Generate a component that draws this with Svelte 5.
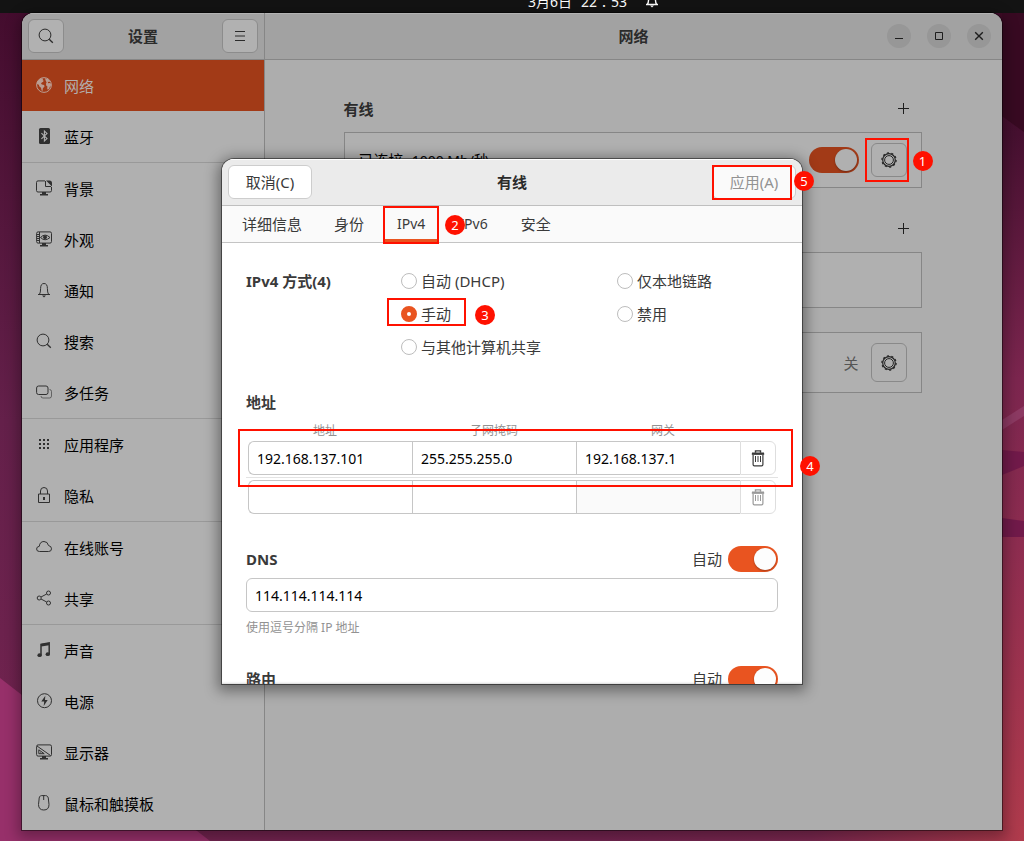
<script lang="ts">
  type Item = { name: string; icon: string; divide?: boolean };

  const items: Item[] = [
    { name: '网络', icon: 'globe' },
    { name: '蓝牙', icon: 'bluetooth', divide: true },
    { name: '背景', icon: 'background' },
    { name: '外观', icon: 'appearance' },
    { name: '通知', icon: 'bell' },
    { name: '搜索', icon: 'search' },
    { name: '多任务', icon: 'windows', divide: true },
    { name: '应用程序', icon: 'apps' },
    { name: '隐私', icon: 'lock', divide: true },
    { name: '在线账号', icon: 'cloud' },
    { name: '共享', icon: 'share', divide: true },
    { name: '声音', icon: 'music' },
    { name: '电源', icon: 'power' },
    { name: '显示器', icon: 'display' },
    { name: '鼠标和触摸板', icon: 'mouse' },
  ];
  let page = $state('网络');

  const tabs = ['详细信息', '身份', 'IPv4', 'IPv6', '安全'];
  let tab = $state('IPv4');

  const methods = [
    ['auto', '自动 (DHCP)'],
    ['link', '仅本地链路'],
    ['manual', '手动'],
    ['off', '禁用'],
    ['shared', '与其他计算机共享'],
  ];
  let method = $state('manual');

  let rows = $state([
    ['192.168.137.101', '255.255.255.0', '192.168.137.1'],
    ['', '', ''],
  ]);
  const columns = ['地址', '子网掩码', '网关'];

  let wired = $state(true);
  let dnsAuto = $state(true);
  let routeAuto = $state(true);
  let dns = $state('114.114.114.114');
</script>

{#snippet icon(name: string)}
  <svg class="icon" viewBox="0 0 16 16" width="16" height="16" fill="none" stroke="currentColor" aria-hidden="true">
    {#if name === 'globe'}
      <circle cx="8" cy="8" r="7.4" />
      <path fill="currentColor" stroke="none" d="M1 5.2 3 2.4 5.6 1.2l1.6.6-.6 1.4 1 .4-.4 1.2-1.4.6-.8 1.4 1 .6 2 .6.6 1.2-1 1.4-.8 1-.2 2.4-1-.6-.6-2.6L3.4 9.6l-.6-1.8L1 7zM9 1.2l3 .8 2 2.2-.6.8-1.6-.2.4 1.4 1.8-.2 1 1-.2 2.2-1 .6-.6 2-1.4 1-.6-1.4.2-1.8-1.2-1.2L10 6.8l.6-1.6-.8-1.2z" />
    {:else if name === 'bluetooth'}
      <rect x="3" y="0" width="11" height="16" rx="1.5" fill="currentColor" stroke="none" />
      <path stroke="#b0b0b0" stroke-width="1.1" d="M5.4 5.2 11 10.6 8.4 13V3L11 5.4l-5.6 5.4" />
    {:else if name === 'background'}
      <path d="M9 .9H2Q.5.9.5 2.4v8.2Q.5 12 2 12h12q1.5 0 1.5-1.4V7M9.500 1v5.500h5.500" />
      <path fill="currentColor" stroke="none" d="M10 .500h3.500Q16 .500 16 3v3.500zM6 12h4v2h2v1.500H4V14h2z" />
    {:else if name === 'appearance'}
      <rect x=".6" y=".9" width="14.900" height="11.200" rx="1.500" />
      <path d="M3.500 1v11M1 3.500h2M1 5.500h2M1 7.500h2M1 9.500h2M4.500 6.500Q9 1.700 14 6.500 9 11 4.500 6.500z" />
      <circle cx="9" cy="6.300" r="1.500" fill="currentColor" />
      <path fill="currentColor" stroke="none" d="M6 12h4v2h2v1.500H4V14h2z" />
    {:else if name === 'bell'}
      <path d="M2 12.500h12M3.500 12.300Q4.600 10.500 4.600 6.500 4.600 1.500 8 1.500t3.400 5q0 4 1.100 5.800" />
      <path fill="currentColor" stroke="none" d="M6 13.500h4L8 15.500z" />
    {:else if name === 'search'}
      <circle cx="7" cy="7" r="5.900" /><path stroke-width="1.300" d="m11.200 11.200 3.600 3.600" />
    {:else if name === 'windows'}
      <rect x=".6" y="2" width="11.400" height="8.500" rx="2" />
      <path opacity=".6" d="M13.500 5.500q2 0 2 2V12q0 2-2 2H7q-2 0-2-2" />
    {:else if name === 'apps'}
      <path stroke-width="2" stroke-dasharray="2 2" d="M3 4h12M3 8h12M3 12h12" />
    {:else if name === 'lock'}
      <path d="M2.500 7h11v8.500h-11zM4.500 7V4q0-3.500 3.500-3.500T11.500 4v3" />
      <path stroke-width="2" d="M8 10v3" />
    {:else if name === 'cloud'}
      <path d="M3.500 12.500Q.6 12.500.6 10q0-2.400 2.700-2.700Q3.800 2.500 8 2.500q3.600 0 4.500 4 3 .6 3 3.300 0 2.700-2.900 2.700z" />
    {:else if name === 'share'}
      <circle cx="3.200" cy="8" r="2" /><circle cx="12.500" cy="3" r="2" /><circle cx="12.500" cy="13" r="2" />
      <path d="m5 7 5.700-3M5 9l5.700 3" />
    {:else if name === 'music'}
      <path stroke-width="1.500" d="M5 13V2.300L13.200 1v11" />
      <path stroke-width="2.500" d="M5 3.200 13 2" />
      <ellipse cx="3.600" cy="13.200" rx="2.200" ry="1.900" fill="currentColor" stroke="none" />
      <ellipse cx="11.800" cy="12.200" rx="2.200" ry="1.900" fill="currentColor" stroke="none" />
    {:else if name === 'power'}
      <circle cx="8.500" cy="7.700" r="7" /><path fill="currentColor" stroke="none" d="M9.300 2.700 5.300 8.500h2.900l-.5 4.500 4-6H9z" />
    {:else if name === 'display'}
      <rect x=".6" y=".9" width="14.900" height="11.200" rx="1.500" />
      <path d="m1 2 13.500 9.500M2.800 5.800V9.700h5.400zM4.500 8v.500" />
      <path fill="currentColor" stroke="none" d="M6 12h4v2h2v1.500H4V14h2z" />
    {:else if name === 'mouse'}
      <path d="M3 5Q3 .600 5.500.600h4Q12.500.600 12.500 5l.500 4.500q0 5.500-5.200 5.500T2.500 9.500zM7.700.600V5" />
    {:else if name === 'menu'}
      <path d="M3 3.500h10M3 8h10M3 12.500h10" />
    {:else if name === 'min'}
      <path d="M4 10.500h8" />
    {:else if name === 'max'}
      <path d="M4.500 4.500h7v7h-7z" />
    {:else if name === 'close'}
      <path stroke-width="1.400" d="m4.200 4.200 7.600 7.600m0-7.600-7.600 7.600" />
    {:else if name === 'plus'}
      <path d="M8.500 3v11M3 8.500h11" />
    {:else if name === 'gear'}
      <circle cx="8" cy="8" r="6.300" stroke-width="1.200" />
      <circle cx="8" cy="8" r="4.400" />
      <circle cx="8" cy="8" r="7.100" stroke-width="1.300" stroke-dasharray="2 2.461" />
    {:else if name === 'trash'}
      <path stroke-width="2" d="M2 3.500h12" />
      <path stroke-width="1.400" d="M1.800 4h12.400M5.500 2.700V.900h5v1.800" />
      <path stroke-width="1.200" d="M3.100 5v9.500q0 1.300 1.300 1.300h7.200q1.300 0 1.300-1.300V5" />
      <path d="M5.500 6v6M8 6v6M10.500 6v6" />
    {/if}
  </svg>
{/snippet}

<div class="desktop">
  <svg class="wall" viewBox="0 0 1024 841" preserveAspectRatio="none" aria-hidden="true">
    <defs>
      <linearGradient id="base" x1="0" y1="0" x2="0" y2="1">
        <stop offset="0" stop-color="#430c2d" />
        <stop offset=".5" stop-color="#64204a" />
        <stop offset="1" stop-color="#742450" />
      </linearGradient>
      <linearGradient id="right" x1="0" y1="0" x2="0" y2="1">
        <stop offset="0" stop-color="#3d0a24" />
        <stop offset=".16" stop-color="#461030" />
        <stop offset=".45" stop-color="#7c264f" />
        <stop offset=".65" stop-color="#8e2d50" />
        <stop offset="1" stop-color="#b03b4c" />
      </linearGradient>
      <linearGradient id="floor" x1="0" y1="0" x2="1" y2="0">
        <stop offset="0" stop-color="#742450" />
        <stop offset=".5" stop-color="#7c2850" />
        <stop offset="1" stop-color="#b03b4c" />
      </linearGradient>
    </defs>
    <rect width="1024" height="841" fill="url(#base)" />
    <path d="M1000 0h24v841h-24z" fill="url(#right)" />
    <path d="M600 826h424v15H600z" fill="url(#floor)" />
    <path d="M0 678 210 841H0z" fill="#97306a" />
    <path d="M1002 116l22 16V0h-22z" fill="#380a22" />
    <path d="M1002 420l22-14v10l-22 14z" fill="#8d3a63" />
    <path d="M1002 450l22 2v14l-22 9z" fill="#711a4a" />
    <path d="M1002 518l22 3v16h-22z" fill="#711a4a" />
  </svg>

  <header class="topbar">
    <span>3月6日</span>
    <span>22∶53</span>
    {@render icon('bell')}
  </header>

  <main class="window">
    <aside class="side">
      <div class="bar sidebar-head">
        <button class="tool" aria-label="搜索">{@render icon('search')}</button>
        <h1>设置</h1>
        <button class="tool" aria-label="菜单">{@render icon('menu')}</button>
      </div>
      <nav>
        {#each items as item}
          <button class="nav" class:active={page === item.name} class:divide={item.divide} onclick={() => (page = item.name)}>
            {@render icon(item.icon)}<span>{item.name}</span>
          </button>
        {/each}
      </nav>
    </aside>

    <section class="pane">
      <div class="bar pane-head">
        <h1>网络</h1>
        <div class="controls">
          <button class="round" aria-label="最小化">{@render icon('min')}</button>
          <button class="round" aria-label="最大化">{@render icon('max')}</button>
          <button class="round" aria-label="关闭">{@render icon('close')}</button>
        </div>
      </div>
      <div class="content">
        <div class="group">
          <h2>有线</h2>
          <button class="plain" aria-label="添加有线">{@render icon('plus')}</button>
        </div>
        <div class="card">
          <span class="status">已连接<small> - 1000 Mb/</small>秒</span>
          <input class="switch dim" type="checkbox" role="switch" aria-label="有线" bind:checked={wired} />
          <div class="anchor">
            <button class="gear" aria-label="有线选项">{@render icon('gear')}</button>
            <span class="mark m1"></span><span class="badge b1">1</span>
          </div>
        </div>
        <div class="group second">
          <button class="plain" aria-label="添加 VPN">{@render icon('plus')}</button>
        </div>
        <div class="card"></div>
        <div class="card proxy">
          <span class="off">关</span>
          <button class="gear" aria-label="代理选项">{@render icon('gear')}</button>
        </div>
      </div>
    </section>
  </main>

  <div class="dialog" role="dialog" aria-label="有线">
    <div class="frame">
      <div class="dialog-head">
        <button class="action">取消(C)</button>
        <h1>有线</h1>
        <button class="action" disabled>应用(A)</button>
      </div>
      <div class="tabs" role="tablist">
        {#each tabs as name}
          <button role="tab" aria-selected={tab === name} class:latin={name.startsWith('IP')} class:current={tab === name} onclick={() => (tab = name)}>{name}</button>
        {/each}
      </div>
      <div class="body">
        <div class="methods" role="radiogroup" aria-label="IPv4 方式">
          <h2>IPv4 方式(4)</h2>
          <div class="options">
            {#each methods as [value, label]}
              <label><input type="radio" name="method" {value} bind:group={method} /><span>{label}</span></label>
            {/each}
          </div>
        </div>

        <h2 class="address-title">地址</h2>
        <div class="columns">
          {#each columns as column}<span>{column}</span>{/each}
        </div>
        <div class="rows">
          {#each rows as row, i}
            <div class="entry" class:blank={i > 0}>
              {#each row as _, j}
                <input aria-label={columns[j]} disabled={i > 0 && j === 2} bind:value={rows[i][j]} />
              {/each}
              <button disabled={i > 0} aria-label="删除">{@render icon('trash')}</button>
            </div>
          {/each}
        </div>

        <div class="line">
          <h2>DNS</h2>
          <label>自动<input class="switch" type="checkbox" role="switch" bind:checked={dnsAuto} /></label>
        </div>
        <input class="dns" aria-label="DNS" bind:value={dns} />
        <p>使用逗号分隔 IP 地址</p>
        <div class="line route">
          <h2>路由</h2>
          <label>自动<input class="switch" type="checkbox" role="switch" bind:checked={routeAuto} /></label>
        </div>
      </div>
    </div>
    <span class="mark m2"></span><span class="badge b2">2</span>
    <span class="mark m3"></span><span class="badge b3">3</span>
    <span class="mark m4"></span><span class="badge b4">4</span>
    <span class="mark m5"></span><span class="badge b5">5</span>
  </div>
</div>

<style>
  * { box-sizing: border-box; }
  .desktop {
    position: relative;
    min-height: 100vh;
    display: flex;
    flex-direction: column;
    padding-bottom: 11px;
    overflow: hidden;
    isolation: isolate;
    font: 15px/22px "Noto Sans", "Noto Sans CJK SC", sans-serif;
    color: #000;
  }
  button, input { font: inherit; color: inherit; margin: 0; }
  button { padding: 0; border: 0; background: none; }
  h1, h2, p { margin: 0; }
  h1, h2 { font-size: 15px; line-height: 22px; font-weight: 700; color: #2b2b2b; }
  small { font-size: 14px; white-space: pre; }
  .icon { display: block; flex: none; overflow: visible; }
  .wall { position: absolute; inset: 0; width: 100%; height: 100%; z-index: -1; }
  .topbar {
    height: 13px;
    background: #131313;
    color: #fff;
    display: flex;
    justify-content: center;
    align-items: flex-end;
    gap: 9px;
    padding-left: 164px;
    font-size: 14px;
    overflow: hidden;
  }
  .topbar .icon { margin: 0 0 5px 8px; stroke-width: 1.4; }

  .window {
    flex: 1;
    margin: 0 22px;
    display: flex;
    border-radius: 12px 12px 0 0;
    overflow: hidden;
    background: #adadad;
    box-shadow: 0 0 0 1px rgba(0, 0, 0, .45), 0 4px 14px 4px rgba(0, 0, 0, .3);
  }
  .bar { height: 47px; background: #a2a2a2; border-bottom: 1px solid #868686; box-shadow: inset 0 1px #b3b3b3; }
  .side { width: 243px; flex: none; background: #b0b0b0; border-right: 1px solid #868686; }
  .sidebar-head { display: flex; justify-content: space-between; align-items: center; padding: 0 6px; }
  .tool {
    width: 36px;
    height: 34px;
    display: grid;
    place-items: center;
    border: 1px solid #8c8c8c;
    border-radius: 6px;
    background: #b1b1b1;
    color: #2b2b2b;
  }
  nav { display: flex; flex-direction: column; }
  .nav { height: 51px; display: flex; align-items: center; gap: 12px; padding: 0 14px 2px; text-align: left; }
  .nav .icon { color: #303030; }
  .nav span { padding-top: 2px; }
  .nav.divide { height: 52px; border-bottom: 1px solid #999; }
  .nav.active { background: #a23a17; color: #b3aeac; }
  .nav.active .icon { color: #bb9d92; }

  .pane { flex: 1; min-width: 0; }
  .pane-head { display: grid; grid-template-columns: 1fr auto 1fr; align-items: center; padding: 0 11px; }
  .pane-head h1 { grid-column: 2; }
  .controls { display: flex; justify-content: flex-end; gap: 16px; }
  .round { width: 24px; height: 24px; border-radius: 50%; background: #979797; display: grid; place-items: center; color: #1d1d1d; }
  .content { max-width: 580px; margin: 0 auto; padding: 36px 2px 0 0; }
  .group { display: flex; justify-content: space-between; align-items: center; height: 26px; margin-bottom: 10px; padding: 0 11px 2px 0; }
  .group h2 { padding-top: 2px; }
  .second { margin-top: 28px; justify-content: flex-end; }
  .plain { color: #1d1d1d; }
  .card {
    min-height: 56px;
    display: flex;
    align-items: center;
    justify-content: flex-end;
    gap: 12px;
    padding: 10px 14px;
    border: 1px solid #868686;
    background: #b0b0b0;
  }
  .status { margin-right: auto; }
  .proxy { margin-top: 24px; min-height: 61px; }
  .off { color: #555; }
  .anchor { position: relative; }
  .gear { width: 36px; height: 34px; display: grid; place-items: center; border: 1px solid #898989; border-radius: 6px; color: #262626; }
  .proxy .gear { height: 39px; }

  .switch {
    appearance: none;
    width: 50px;
    height: 26px;
    padding: 2px;
    border-radius: 13px;
    background: #bbb;
    display: flex;
    flex: none;
  }
  .switch::before { content: ""; width: 22px; height: 22px; border-radius: 50%; background: #fdfdfd; box-shadow: 0 1px 2px rgba(0, 0, 0, .3); }
  .switch:checked { background: #e95420; justify-content: flex-end; }
  .dim:checked { background: #a23a17; }
  .dim::before { background: #b0b0b0; }

  .dialog { position: absolute; top: 159px; bottom: 157px; left: 0; right: 0; width: 580px; max-width: 100%; margin: 0 auto; color: #3a3a3a; }
  .frame {
    height: 100%;
    display: flex;
    flex-direction: column;
    overflow: hidden;
    border-radius: 12px 12px 0 0;
    background: #fff;
    box-shadow: 0 0 0 1px rgba(0, 0, 0, .45), 0 3px 14px 4px rgba(0, 0, 0, .4);
  }
  .dialog-head {
    flex: none;
    height: 47px;
    display: grid;
    grid-template-columns: 1fr auto 1fr;
    align-items: center;
    padding: 0 6px;
    background: #ebebeb;
    border-bottom: 1px solid #bfbfbf;
    box-shadow: inset 0 1px #fff;
  }
  .action { width: 84px; height: 34px; border: 1px solid #cdcdcd; border-radius: 6px; background: #fff; }
  .action:last-child { justify-self: end; }
  .action:disabled { color: #929292; background: #fafafa; }
  .tabs { flex: none; display: flex; gap: 8px; height: 37px; padding: 0 8px; background: #fafafa; border-bottom: 1px solid #c4c4c4; }
  .tabs button { padding: 3px 12px 0; border-bottom: 3px solid transparent; }
  .tabs .latin { font-size: 14px; padding: 2px 13px 0; }
  .tabs .current { border-color: #e95420; }
  .body { flex: 1; min-height: 0; overflow: hidden; padding: 26px 24px 0; box-shadow: inset 0 -2px 2px -1px rgba(0, 0, 0, .15); }
  .body h2 { color: #3a3a3a; }
  .methods { display: flex; }
  .methods h2 { width: 155px; padding-top: 1px; }
  .options { display: grid; grid-template-columns: 216px auto; row-gap: 10px; }
  .options label { display: flex; align-items: center; gap: 4px; height: 23px; white-space: nowrap; }
  .options span { padding-top: 1px; }
  .options input { appearance: none; width: 16px; height: 16px; border: 1px solid #bdbdbd; border-radius: 50%; background: #fff; }
  .options input:checked { border: 6px solid #e95420; }
  .address-title { margin-top: 33px; }
  .columns {
    display: grid;
    grid-template-columns: 158fr 180fr 158fr 36fr;
    margin-top: 8px;
    font-size: 12px;
    line-height: 20px;
    color: #929292;
    text-align: center;
  }
  .entry { display: flex; height: 34px; margin: 0 2px; }
  .entry input, .dns { min-width: 0; height: 34px; padding: 0 8px; border: 1px solid #c6c6c6; background: #fff; font-size: 14px; color: #000; }
  .entry input { flex: 1; border-right: 0; }
  .entry input:first-child { border-radius: 6px 0 0 6px; }
  .entry input:disabled { background: #fafafa; }
  .entry button { width: 36px; display: grid; place-items: center; border: 1px solid #dedede; border-radius: 0 6px 6px 0; }
  .entry button:disabled { color: #999; }
  .blank { position: relative; margin-top: 5px; }
  .blank::before { content: ""; position: absolute; top: -3px; left: -2px; right: -2px; height: 1px; background: #e3e3e3; }
  .line { display: flex; justify-content: space-between; align-items: center; margin-top: 32px; height: 26px; }
  .line label { display: flex; align-items: center; gap: 6px; }
  .dns { display: block; width: 100%; margin-top: 6px; border-radius: 6px; }
  p { margin-top: 6px; font-size: 12px; line-height: 20px; color: #929292; }
  .route { margin-top: 28px; }

  .mark { position: absolute; border: 2px solid #f10; pointer-events: none; }
  .badge { position: absolute; width: 20px; height: 20px; border-radius: 50%; background: #f10; color: #fff; font-size: 13px; line-height: 20px; text-align: center; }
  .m1 { inset: -5px -2px -5px -6px; }
  .b1 { left: 42px; top: 8px; }
  .m2 { left: 161px; top: 47px; width: 56px; height: 38px; }
  .b2 { left: 223px; top: 56px; }
  .m3 { left: 165px; top: 139px; width: 79px; height: 28px; }
  .b3 { left: 253px; top: 146px; }
  .m4 { left: 16px; right: 9px; top: 270px; height: 58px; }
  .b4 { right: -18px; top: 297px; }
  .m5 { right: 10px; top: 6px; width: 80px; height: 35px; }
  .b5 { right: -12px; top: 12px; }
</style>
